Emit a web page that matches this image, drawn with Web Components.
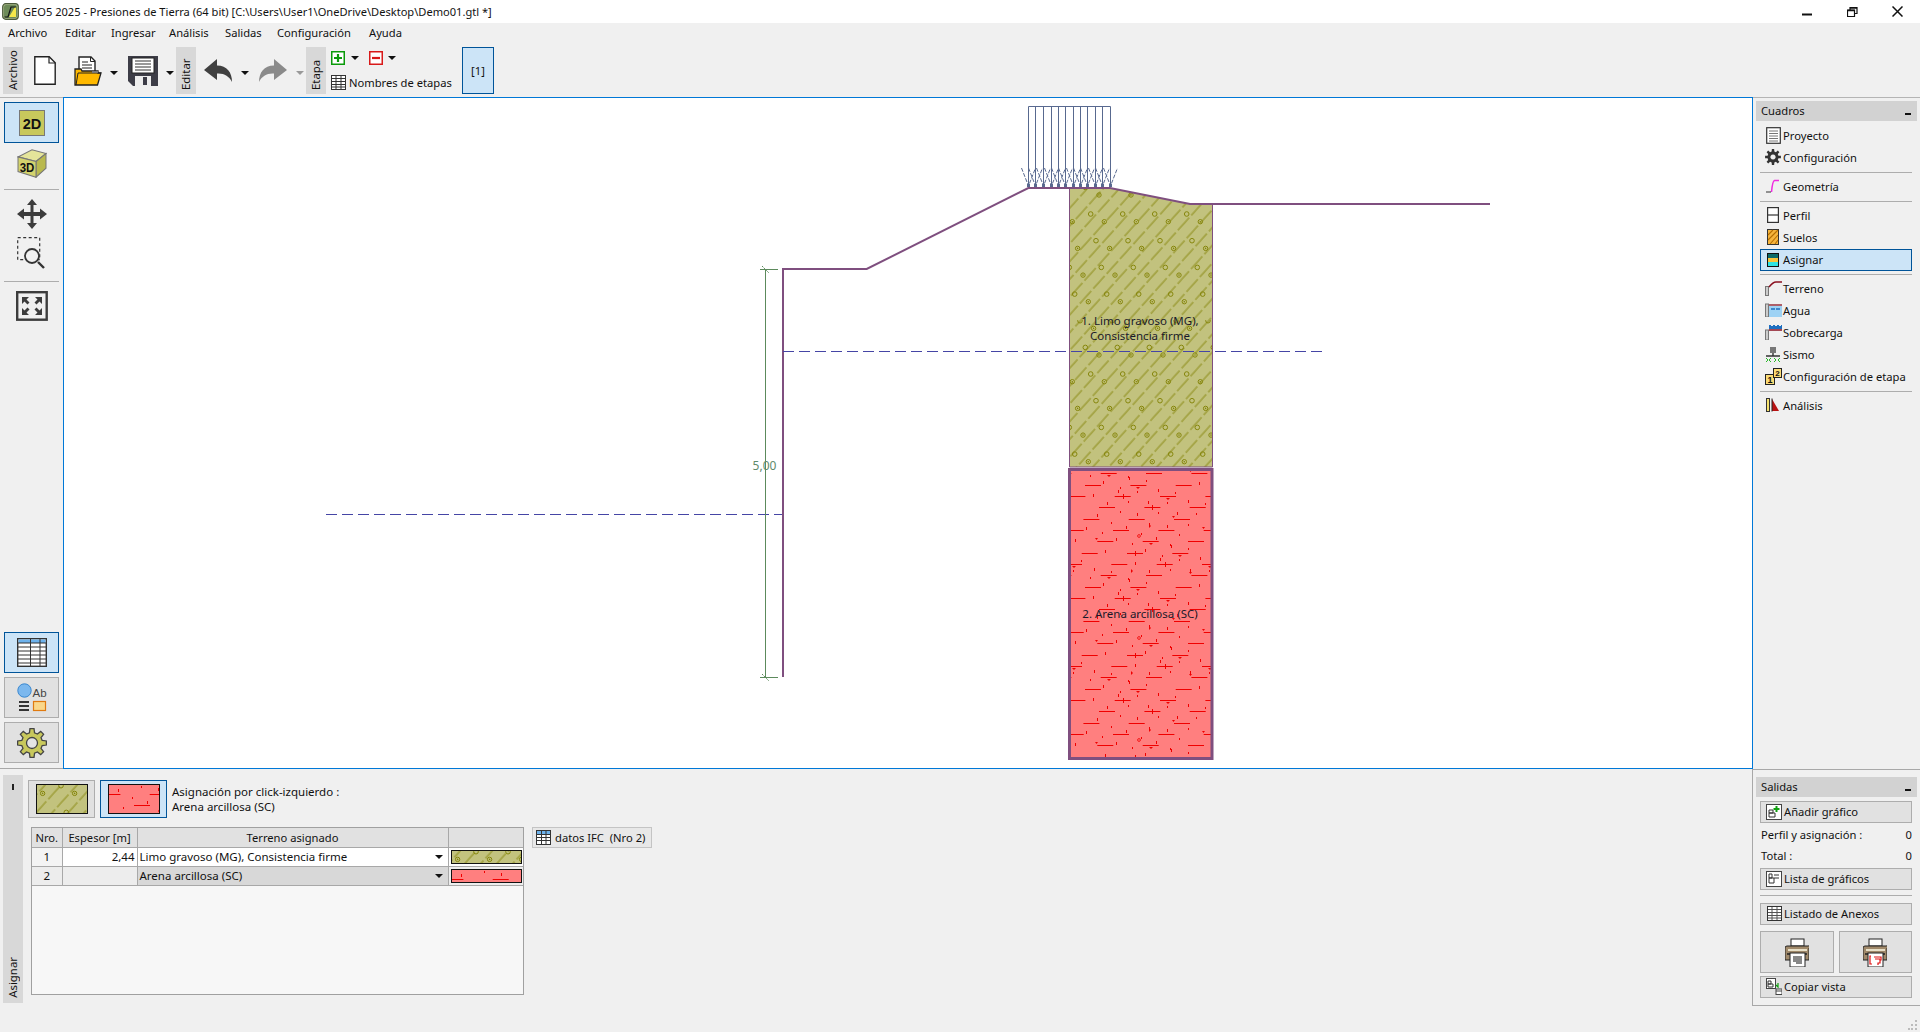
<!DOCTYPE html>
<html lang="es"><head><meta charset="utf-8"><title>GEO5 2025</title>
<style>
html,body{margin:0;padding:0;height:100%;overflow:hidden;background:#f0f0f0}
body{font:11.2px "Noto Sans","Liberation Sans",sans-serif;color:#111}
</style></head><body>
<geo-app></geo-app>
<script>
const svg=(w,h,b,vb)=>`<svg xmlns="http://www.w3.org/2000/svg" width="${w}" height="${h}" viewBox="${vb||`0 0 ${w} ${h}`}" style="display:block;flex:none">${b}</svg>`;
function gearPath(cx,cy,R,r,n){let d='';for(let i=0;i<n;i++){const a=i*2*Math.PI/n,s=Math.PI/n;
 const P=(rad,t)=>`${(cx+rad*Math.cos(a+t)).toFixed(2)} ${(cy+rad*Math.sin(a+t)).toFixed(2)}`;
 d+=(i?'L':'M')+P(r,-s*.62)+'L'+P(R,-s*.36)+'L'+P(R,s*.36)+'L'+P(r,s*.62);}
 return d+'Z';}
const soilDefs=(()=>{
 const mod=(v,m)=>((v%m)+m)%m;
 let c='';
 for(let i=0;i<6;i++){
  const dx=mod(1088.3+5.33*i,32),dy=mod(301.7+26.67*i,160),hx=mod(1080+5.33*i,32),hy=mod(320.7+26.67*i,160);
  for(const o of[-32,0,32]){
   c+=`<circle cx="${(dx+o).toFixed(1)}" cy="${dy.toFixed(1)}" r="2.2" fill="none" stroke="#85850a"/><circle cx="${(dx+o).toFixed(1)}" cy="${dy.toFixed(1)}" r=".8" fill="#85850a"/>`;
   c+=`<circle cx="${(hx+o).toFixed(1)}" cy="${hy.toFixed(1)}" r="2.3" fill="none" stroke="#85850a"/>`;
  }
 }
 let t='';const W=136,H=102;
 const oy=mod(473.3,H),ox=mod(1100.7,W);
 for(let k=0;k<9;k++)for(let j=0;j<3;j++){
  const x=mod(ox-15.67*k+45.33*j,W),y=mod(oy+11.33*k,H);
  for(const o of[-W,0])t+=`<rect x="${(x+o).toFixed(1)}" y="${y.toFixed(0)}" width="16" height="1" fill="#f00000"/>`;
  const s=(k*7+j*5)%6;
  if(s==0)t+=`<path d="M${(x+6).toFixed(0)} ${(y+2).toFixed(0)}h4l-2 2z" fill="#f00000"/>`;
  if(s==1)t+=`<rect x="${(x+8).toFixed(0)}" y="${(y-2).toFixed(0)}" width="1" height="5" fill="#f00000"/>`;
  if(s==2)t+=`<path d="M${(x+20).toFixed(0)} ${(y+5).toFixed(0)}v4l2-2z" fill="#f00000"/>`;
  if(s==3)t+=`<circle cx="${(x+26).toFixed(0)}" cy="${(y+6).toFixed(0)}" r="1.4" fill="none" stroke="#f00000" stroke-width=".8"/>`;
  if(s==4)t+=`<path d="M${(x-2).toFixed(0)} ${(y-3).toFixed(0)}h3l-1.5 2z" fill="#f00000"/>`;
  t+=`<rect x="${mod(x+(s+1)*5+23,W).toFixed(0)}" y="${mod(y+4+s,H).toFixed(0)}" width="1" height="3" fill="#f00000"/>`;
  t+=`<rect x="${mod(x+(s+2)*7+31,W).toFixed(0)}" y="${mod(y+7-s,H).toFixed(0)}" width="1" height="2" fill="#f00000"/>`;
 }
 return `<defs>
 <pattern id="sc" patternUnits="userSpaceOnUse" width="32" height="160">${c}</pattern>
 <pattern id="sl" patternUnits="userSpaceOnUse" width="20" height="11.9" patternTransform="rotate(-48)"><line x1="0" y1="6" x2="20" y2="6" stroke="#85850a" stroke-width=".9" stroke-dasharray="14 3"/></pattern>
 <pattern id="sr" patternUnits="userSpaceOnUse" width="${W}" height="${H}">${t}</pattern></defs>`;
})();
const I={
 title:svg(17,17,`<rect x=".7" y=".7" width="15.6" height="15.6" rx="3" fill="#a9b98a" stroke="#4a5a3a" stroke-width="1.2"/><rect x="2" y="2" width="13" height="13" rx="2" fill="#6d8b58"/><path d="M7 14h7V4h-1z" fill="#f5e84a"/><path d="M2.5 14H6L9 4h5" fill="none" stroke="#111" stroke-width="1.2"/>`),
 new:svg(22,29,`<path d="M.8.8h14.4l6 6v21.4H.8z" fill="#fff" stroke="#222" stroke-width="1.4"/><path d="M15 .8v6.2h6.2" fill="none" stroke="#222" stroke-width="1.2"/>`),
 open:svg(28,30,`<path d="M5 1h12l4 4v14H5z" fill="#fff" stroke="#222" stroke-width="1.4"/><path d="M16.500 1v4.500H21" fill="none" stroke="#222"/><path d="M8 6h6M8 9h10M8 12h10" stroke="#222" stroke-width="1.200"/><path d="M1 13h6l1 2h16v2h3l-3.500 12H1z" fill="#ffb900" stroke="#222" stroke-width="1.300"/><path d="M2 29 4 17h23" fill="none" stroke="#222" stroke-width="1"/><rect x="18" y="15" width="6" height="2" fill="#777"/>`),
 save:svg(30,30,`<path d="M0 0h30v30H5l-5-5z" fill="#3d3d47"/><rect x="4" y="2" width="22" height="15" fill="#fff" stroke="#222"/><path d="M7 5h16M7 8h16M7 11h16M7 14h16" stroke="#333" stroke-width="1.2"/><rect x="7" y="20" width="16" height="10" fill="#eee"/><rect x="15" y="21" width="4" height="8" fill="#3d3d47"/>`),
 undo:svg(28,23,`<path d="M0 11 13 0v6.5c10 0 15 7 15 16.500-3-6-8-9-15-8.500V21z" fill="#404040"/>`),
 redo:svg(28,23,`<path d="M28 11 15 0v6.500C5 6.500 0 13.500 0 23c3-6 8-9 15-8.500V21z" fill="#8a8a8a"/>`),
 caret:svg(8,4,`<path d="M0 0h8L4 4z" fill="#111"/>`),
 caretg:svg(8,4,`<path d="M0 0h8L4 4z" fill="#999"/>`),
 plus:svg(14,14,`<rect x=".75" y=".75" width="12.5" height="12.5" fill="#fff" stroke="#0a9a0a" stroke-width="1.500"/><path d="M7 3v8M3 7h8" stroke="#0a9a0a" stroke-width="2.200"/>`),
 minus:svg(14,14,`<rect x=".75" y=".75" width="12.500" height="12.500" fill="#fff" stroke="#d81a1a" stroke-width="1.500"/><path d="M3 7h8" stroke="#d81a1a" stroke-width="2.200"/>`),
 grid:svg(15,15,`<rect x=".5" y=".5" width="14" height="14" fill="#fff" stroke="#333"/><path d="M1 3.500h13M1 6.500h13M1 9.500h13M1 12h13M5 1v13M10 1v13" stroke="#333"/>`),
 d2:svg(26,26,`<rect x=".5" y=".5" width="25" height="25" fill="#c8c85c" stroke="#777"/><text x="13" y="18.500" text-anchor="middle" font-family="'Liberation Sans',sans-serif" font-weight="700" font-size="14.500" fill="#111">2D</text>`),
 d3:svg(30,29,`<g transform="scale(1,1.13)"><path d="M1 7 15 .7 29 4 19 11z" fill="#e4e49a" stroke="#777"/><path d="M19 11 29 4v13l-10 8z" fill="#b9b94e" stroke="#777"/><path d="M1 7l18 4v14L1 20z" fill="#d3d36d" stroke="#777"/><text x="10" y="20" text-anchor="middle" font-family="'Liberation Sans',sans-serif" font-weight="700" font-size="11.500" fill="#111">3D</text></g>`),
 move:svg(30,30,`<path d="M15 0l5 6h-3.500v7H23V9.500l7 5.500-7 5.500V17h-6.500v7H20l-5 6-5-6h3.500v-7H7v3.500L0 15l7-5.500V13h6.500V6H10z" fill="#3c3c3c"/>`),
 zoomr:svg(30,32,`<rect x=".7" y=".7" width="22" height="22" fill="none" stroke="#333" stroke-width="1.200" stroke-dasharray="3 2.500"/><circle cx="15" cy="19" r="7" fill="#f0f0f0" stroke="#333" stroke-width="1.800"/><path d="M21 25l6 6" stroke="#333" stroke-width="2.400"/>`),
 full:svg(32,30,`<rect x="1.200" y="1.200" width="29.500" height="27.500" fill="none" stroke="#3c3c3c" stroke-width="2.400"/><g fill="#3c3c3c"><path d="M6 6h7l-2.500 2.500 3 3-2 2-3-3L6 13zM26 6v7l-2.500-2.500-3 3-2-2 3-3L19 6zM6 24v-7l2.500 2.500 3-3 2 2-3 3L13 24zM26 24h-7l2.500-2.500-3-3 2-2 3 3L26 17z"/></g>`),
 tbl:svg(30,29,`<rect x=".7" y=".7" width="28.600" height="27.600" fill="#fff" stroke="#333" stroke-width="1.400"/><rect x="1.500" y="1.500" width="27" height="3.500" fill="#6db2ec"/><path d="M1 5h28M1 9h28M1 13h28M1 17h28M1 21h28M1 25h28M13.500 1v27M23 1v27" stroke="#333" stroke-width="1"/>`),
 tbl2:svg(15,15,`<rect x=".5" y=".5" width="14" height="14" fill="#fff" stroke="#333"/><rect x="1" y="1" width="13" height="3" fill="#6db2ec"/><path d="M1 4.500h13M1 7.500h13M1 10.500h13M5.500 1v13M10 1v13" stroke="#333"/>`),
 ab:svg(30,30,`<circle cx="7.500" cy="7.500" r="6.700" fill="#7cb8ee" stroke="#3a88d0" stroke-width="1"/><text x="15.500" y="14" font-family="'Liberation Sans',sans-serif" font-size="11.500" fill="#444">Ab</text><path d="M2 19h10M2 23h10M2 27h10" stroke="#333" stroke-width="1.800"/><rect x="16.500" y="18.500" width="12" height="9" fill="#fad78a" stroke="#e07a10" stroke-width="1.200"/>`),
 gear:svg(30,30,`<path d="${gearPath(15,15,14.500,10.500,8)}" fill="#c8c85c" stroke="#444" stroke-width="1.300"/><circle cx="15" cy="15" r="5.500" fill="#e4e4e4" stroke="#444" stroke-width="1.300"/>`),
 doc:svg(15,17,`<rect x=".7" y=".7" width="13.600" height="15.600" fill="#fff" stroke="#333" stroke-width="1.200"/><path d="M3 4h9M3 6.500h9M3 9h9M3 11.500h9M3 14h9" stroke="#666" stroke-width=".9"/>`),
 gearD:svg(16,16,`<path fill-rule="evenodd" d="${gearPath(8,8,8,5.600,8)}M8 5.400a2.600 2.600 0 1 0 .01 0z" fill="#333"/>`),
 geom:svg(14,14,`<path d="M5.500 13Q6.500 2 8.500 1.500H13" fill="none" stroke="#f02ce0" stroke-width="1.500"/><path d="M0 13h5" stroke="#333" stroke-width="1"/>`),
 perfil:svg(12,16,`<rect x=".6" y=".6" width="10.800" height="14.800" fill="#fff" stroke="#333" stroke-width="1.200"/><path d="M1 8h10" stroke="#333" stroke-width="1.200"/>`),
 suelos:svg(12,16,`<rect x=".5" y=".5" width="11" height="15" fill="#f6b53d" stroke="#333"/><path d="M1 6 6 1M1 11 11 1M3 15 11 6M8 15l3-4" stroke="#b66d00" stroke-width="1.100"/>`),
 asignar:svg(12,14,`<rect x=".5" y=".5" width="11" height="13" fill="#fff" stroke="#111"/><rect x="1" y="1" width="10" height="4" fill="#0c6a6a"/><rect x="1" y="5" width="10" height="4" fill="#f9c33a"/><rect x="1" y="9" width="10" height="4" fill="#2ee3e3"/>`),
 terreno:svg(17,15,`<rect x=".5" y="5.500" width="3" height="9" fill="#ccc" stroke="#777"/><path d="M4 6Q8 1 11 1h6" fill="none" stroke="#8a1020" stroke-width="1.500"/>`),
 agua:svg(17,14,`<rect x=".5" y="1" width="3" height="13" fill="#ccc" stroke="#777"/><rect x="4" y="3" width="13" height="11" fill="#9ed2f4"/><path d="M4 2h13" stroke="#8a1020" stroke-width="1.300"/><path d="M6 6h4M11 6h4" stroke="#1e6fc0" stroke-width="1.500"/>`),
 sobre:svg(17,15,`<rect x=".5" y="5" width="3" height="10" fill="#ccc" stroke="#777"/><path d="M4 5h13" stroke="#8a1020" stroke-width="1.500"/><path d="M4 0h2v1h2V0h2v1h2V0h2v1h2V0h1v4H4z" fill="#1e6fc0"/>`),
 sismo:svg(16,15,`<rect x="5" y="0" width="6" height="6" fill="#777"/><path d="M8 6v3M1 9h14" stroke="#333" stroke-width="1.400"/><path d="M1 11l2 2-2 2M6 11l-2 2 2 2M9 11l2 2-2 2M15 11l-2 2 2 2" fill="none" stroke="#2ab82a"/>`),
 etapa:svg(17,17,`<rect x=".5" y="6.500" width="9" height="10" fill="#fbdc76" stroke="#222"/><text x="5" y="15" text-anchor="middle" font-family="'Liberation Sans',sans-serif" font-weight="700" font-size="9" fill="#111">1</text><rect x="8.500" y=".5" width="8" height="9" fill="#fbdc76" stroke="#222"/><text x="12.500" y="8" text-anchor="middle" font-family="'Liberation Sans',sans-serif" font-weight="700" font-size="8" fill="#111">2</text>`),
 analisis:svg(14,14,`<rect x=".5" y=".5" width="3" height="13" fill="#f6e26f" stroke="#333"/><path d="M6 13V1l7 12z" fill="#b81212"/><path d="M6 .5v13" stroke="#222"/>`),
 addg:svg(16,16,`<rect x=".5" y=".5" width="15" height="15" fill="#fff" stroke="#444"/><path d="M3 6h4v3H3zM3 9h6v4H3z" fill="none" stroke="#333"/><path d="M10.500 2v6M7.500 5h6" stroke="#10a010" stroke-width="2"/>`),
 listg:svg(16,16,`<rect x=".5" y=".5" width="15" height="15" fill="#fff" stroke="#444"/><path d="M3 3h3v4H3zM3 7h5v5H3zM8 4h5M8 7h5" fill="none" stroke="#333"/>`),
 list:svg(15,15,`<rect x=".5" y=".5" width="14" height="14" fill="#fff" stroke="#333"/><path d="M1 3.500h13M1 6.500h13M1 9.500h13M1 12h13M5 1v13M10 1v13" stroke="#555"/>`),
 print1:svg(24,29,`<rect x="6" y="1" width="13" height="7" fill="#fff" stroke="#222"/><path d="M0 10a2 2 0 0 1 2-2h21a1 1 0 0 1 1 2v12H0z" fill="#a0896a" stroke="#222"/><path d="M3 12h19" stroke="#e8e0c8" stroke-width="2"/><path d="M2 16h20" stroke="#222" stroke-width="1.500"/><rect x="5" y="15" width="15" height="14" fill="#fff" stroke="#222"/><path d="M8 19h9M8 21h9M8 23h9M11 25h6" stroke="#111"/>`),
 print2:svg(24,29,`<rect x="6" y="1" width="13" height="7" fill="#fff" stroke="#222"/><path d="M0 10a2 2 0 0 1 2-2h21a1 1 0 0 1 1 2v12H0z" fill="#a0896a" stroke="#222"/><path d="M3 12h19" stroke="#e8e0c8" stroke-width="2"/><path d="M2 16h20" stroke="#222" stroke-width="1.500"/><rect x="5" y="15" width="15" height="14" fill="#fff" stroke="#222"/><path d="M8 18h-1v8h2M11 19h7v3h-1v3h-2v2M12 21h5" fill="none" stroke="#e01010" stroke-width="1.200"/>`),
 copy:svg(16,17,`<rect x=".5" y=".5" width="9" height="10" fill="#fff" stroke="#444"/><path d="M2 3h3v3H2zM2 6h5v3H2z" fill="none" stroke="#333"/><path d="M12 5v4l-2-2" fill="none" stroke="#10a010" stroke-width="1.200"/><rect x="10" y="11" width="6" height="5.500" fill="#fff" stroke="#444"/><path d="M10 13h6" stroke="#444"/>`)
};
function def(name,html){customElements.define(name,class extends HTMLElement{
 constructor(){super();this.attachShadow({mode:'open'});}
 connectedCallback(){this.shadowRoot.innerHTML=typeof html==='function'?html(this):html;}
});}
def('geo-icon',el=>`<style>:host{display:inline-flex;flex:none}</style>${I[el.getAttribute('name')]||''}`);
def('geo-titlebar',`<style>:host{display:flex;align-items:center;height:23px;background:#fff;flex:none}
.t{margin-left:4px;font-size:11.1px;white-space:nowrap}.i{margin-left:2px;display:flex}.sp{flex:1}
.w{width:45px;height:23px;display:flex;align-items:center;justify-content:center}</style>
<span class="i"><geo-icon name="title"></geo-icon></span><span class="t">GEO5 2025 - Presiones de Tierra (64 bit) [C:\\Users\\User1\\OneDrive\\Desktop\\Demo01.gtl *]</span><span class="sp"></span>
<span class="w">${svg(11,10,'<path d="M0 7.500h10" stroke="#111" stroke-width="2"/>')}</span>
<span class="w">${svg(11,10,'<path d="M3 2.500V.5h7v6H8M.5 3h7v6.500h-7z" fill="none" stroke="#111" stroke-width="1.200"/><path d="M.5 3.500h7M3 1h7" stroke="#111" stroke-width="1.600"/>')}</span>
<span class="w">${svg(11,11,'<path d="M.5.5l10 10M10.500.5l-10 10" stroke="#111" stroke-width="1.500"/>')}</span>`);
def('geo-menubar',`<style>:host{display:flex;align-items:center;height:21px;padding:0 0 2px 8px;box-sizing:border-box;flex:none;background:#f0f0f0}span{white-space:nowrap;font-size:11.2px}</style>
<span style="width:57px">Archivo</span><span style="width:46px">Editar</span><span style="width:58px">Ingresar</span><span style="width:56px">Análisis</span><span style="width:52px">Salidas</span><span style="width:92px">Configuración</span><span>Ayuda</span>`);
def('geo-vtab',`<style>:host{display:flex;align-items:center;justify-content:flex-start;flex:none;width:20px;height:47px;background:#d8d8d8;font-size:11.4px;writing-mode:vertical-rl;transform:rotate(180deg);box-sizing:border-box;padding-top:4px;padding-left:2px;white-space:nowrap;overflow:hidden}</style><slot></slot>`);
def('geo-toolbar',`<style>:host{display:flex;align-items:center;height:53px;padding:0 0 0 3px;flex:none;box-sizing:border-box;background:#f0f0f0}
geo-icon{display:flex}.c{display:flex;flex-direction:column;width:131px;margin-left:5px;height:47px;justify-content:flex-start;padding-top:4px;box-sizing:border-box}
.r{display:flex;align-items:center}.n{white-space:nowrap;font-size:11.2px;margin-left:3px}
.s{width:32px;height:47px;box-sizing:border-box;background:#cce4f7;border:1px solid #005499;display:flex;align-items:center;justify-content:center;font-size:11.2px}</style>
<geo-vtab>Archivo</geo-vtab><geo-icon name="new" style="margin-left:11px"></geo-icon><geo-icon name="open" style="margin-left:18px"></geo-icon><geo-icon name="caret" style="margin-left:8px;margin-top:4px"></geo-icon><geo-icon name="save" style="margin-left:10px"></geo-icon><geo-icon name="caret" style="margin-left:8px;margin-top:4px"></geo-icon>
<geo-vtab style="margin-left:2px">Editar</geo-vtab><geo-icon name="undo" style="margin-left:8px"></geo-icon><geo-icon name="caret" style="margin-left:9px;margin-top:4px"></geo-icon><geo-icon name="redo" style="margin-left:10px"></geo-icon><geo-icon name="caretg" style="margin-left:9px;margin-top:4px"></geo-icon>
<geo-vtab style="margin-left:2px">Etapa</geo-vtab>
<div class="c"><div class="r"><geo-icon name="plus"></geo-icon><geo-icon name="caret" style="margin-left:6px"></geo-icon><geo-icon name="minus" style="margin-left:10px"></geo-icon><geo-icon name="caret" style="margin-left:5px"></geo-icon></div>
<div class="r" style="margin-top:10px"><geo-icon name="grid"></geo-icon><span class="n">Nombres de etapas</span></div></div>
<div class="s">[1]</div>`);
def('geo-railbtn',`<style>:host{display:flex;align-items:center;justify-content:center;width:55px;height:41px;box-sizing:border-box;flex:none;border:1px solid transparent}
:host([on]){background:#cce4f7;border-color:#005499}:host([off]){background:#e1e1e1;border-color:#adadad}</style><slot></slot>`);
def('geo-rail',`<style>:host{display:flex;flex-direction:column;width:63px;flex:none;box-sizing:border-box;border-top:1px solid #b4b4b4;border-bottom:1px solid #a8a8a8;padding:4px 4px 5px}
.sep{height:1px;background:#adadad;flex:none}.sp{flex:1}</style>
<geo-railbtn on><geo-icon name="d2"></geo-icon></geo-railbtn><geo-railbtn><geo-icon name="d3"></geo-icon></geo-railbtn><div class="sep" style="margin-top:5px"></div>
<geo-railbtn style="margin-top:2px;height:44px"><geo-icon name="move"></geo-icon></geo-railbtn><geo-railbtn style="height:34px"><geo-icon name="zoomr"></geo-icon></geo-railbtn><div class="sep" style="margin-top:11px"></div>
<geo-railbtn style="margin-top:3px"><geo-icon name="full"></geo-icon></geo-railbtn>
<div class="sp"></div>
<geo-railbtn on><geo-icon name="tbl"></geo-icon></geo-railbtn><geo-railbtn off style="margin-top:4px"><geo-icon name="ab"></geo-icon></geo-railbtn><geo-railbtn off style="margin-top:4px"><geo-icon name="gear"></geo-icon></geo-railbtn>`);
def('geo-canvas',()=>{
 const arrows=[1028.3,1035.3,1043.3,1050.6,1058.3,1065.3,1072.6,1080,1087.3,1095.3,1102.3,1110.3].map(x=>x.toFixed(0));
 let load=`<path d="M${arrows[0]}.5 106.500H${arrows[11]}.5" stroke="#58698f"/>`;
 for(const x of arrows){
  load+=`<path d="M${x}.5 106.500V185" stroke="#58698f" stroke-width="1"/><path d="M${+x-7}.5 168 ${x}.5 186 ${+x+7}.5 168" fill="none" stroke="#58698f" stroke-dasharray="4 1.500"/><rect x="${+x-1}" y="184" width="3" height="3" fill="#58698f"/>`;
 }
 const soil1="1069.500,188 1110,188 1190,204 1212.500,204 1212.500,467 1069.500,467";
 return `<style>:host{display:block;flex:1;box-sizing:border-box;border:1px solid #0078d7;background:#fff;min-width:0;overflow:hidden}svg{display:block}text{font:11.5px "Noto Sans","Liberation Sans",sans-serif;fill:#1a1a2a}</style>
 <svg width="1688" height="670" viewBox="64 98 1688 670">${soilDefs}
 <polygon points="${soil1}" fill="#c2c27e"/><polygon points="${soil1}" fill="url(#sl)"/><polygon points="${soil1}" fill="url(#sc)"/>
 <polyline points="1069.500,188 1069.500,467 1212.500,467 1212.500,204" fill="none" stroke="#7f4f7f"/>
 <rect x="1069.500" y="469.500" width="142.500" height="289" fill="#ff7f7f"/><rect x="1069.500" y="469.500" width="142.500" height="289" fill="url(#sr)"/>
 <rect x="1069.500" y="469.500" width="142.500" height="289" fill="none" stroke="#7f4f7f" stroke-width="3"/>
 ${load}
 <polyline points="783,677 783,269 866.700,269 1028.300,188 1110,188 1190,204 1490,204" fill="none" stroke="#7f4f7f" stroke-width="2"/>
 <path d="M783 351.500H1322M326 514.500H782" stroke="#4545a5" stroke-dasharray="11 5"/>
 <g stroke="#5c8a5c"><path d="M765.500 269V677M760 269.500H778M760 677.500H778"/><path d="M762 266l7 7M762 674l7 7" stroke-dasharray="2 1"/></g>
 <text x="764.500" y="470" text-anchor="middle" style="font-size:12px;fill:#5f8a6a">5,00</text>
 <text x="1140" y="325" text-anchor="middle">1. Limo gravoso (MG),</text><text x="1140" y="340" text-anchor="middle">Consistencia firme</text>
 <text x="1140" y="618" text-anchor="middle">2. Arena arcillosa (SC)</text>
 </svg>`;});
def('geo-hdr',`<style>:host{display:flex;align-items:center;height:20px;background:#d2d2d2;margin:0 3px;padding:0 5px 2px;box-sizing:border-box;flex:none;font-size:11.2px}.sp{flex:1}i{width:6px;height:2px;background:#111;margin-top:7px;margin-right:1px}</style><slot></slot><span class="sp"></span><i></i>`);
def('geo-item',el=>`<style>:host{display:flex;align-items:center;height:22px;margin:0 8px 0 7px;box-sizing:border-box;padding:0 0 2px 3px;flex:none;font-size:11.2px;white-space:nowrap}
:host([sel]){background:#cce4f7;border:1px solid #005499;padding:0 0 1px 2px}.b{width:20px;display:flex;justify-content:center;flex:none}</style>
<span class="b"><geo-icon name="${el.getAttribute('icon')}"></geo-icon></span><slot></slot>`);
def('geo-sep',`<style>:host{display:block;height:1px;background:#adadad;margin:3px 8px 3px 7px;flex:none}</style>`);
def('geo-btn',el=>`<style>:host{display:flex;align-items:center;height:22px;margin:0 8px 0 7px;box-sizing:border-box;padding:0 0 1px 3px;flex:none;font-size:11.2px;white-space:nowrap;background:#e1e1e1;border:1px solid #adadad}
.b{width:20px;display:flex;justify-content:center;flex:none}</style><span class="b"><geo-icon name="${el.getAttribute('icon')}"></geo-icon></span><slot></slot>`);
def('geo-panel',`<style>:host{display:flex;flex-direction:column;width:167px;flex:none;box-sizing:border-box;border-top:1px solid #b4b4b4;padding-top:3px}</style>
<geo-hdr>Cuadros</geo-hdr><div style="height:4px"></div>
<geo-item icon="doc">Proyecto</geo-item><geo-item icon="gearD">Configuración</geo-item><geo-sep></geo-sep>
<geo-item icon="geom">Geometría</geo-item><geo-sep></geo-sep>
<geo-item icon="perfil">Perfil</geo-item><geo-item icon="suelos">Suelos</geo-item><geo-item icon="asignar" sel>Asignar</geo-item><geo-sep></geo-sep>
<geo-item icon="terreno">Terreno</geo-item><geo-item icon="agua">Agua</geo-item><geo-item icon="sobre">Sobrecarga</geo-item><geo-item icon="sismo">Sismo</geo-item><geo-item icon="etapa">Configuración de etapa</geo-item><geo-sep></geo-sep>
<geo-item icon="analisis">Análisis</geo-item>`);
def('geo-out',`<style>:host{display:flex;flex-direction:column;width:168px;height:237px;flex:none;box-sizing:border-box;border:1px solid #a8a8a8;border-right:0;padding-top:7px}
.kv{display:flex;justify-content:space-between;height:21px;align-items:center;margin:0 8px 0 8px;font-size:11.2px;flex:none}
.pr{display:flex;gap:5px;margin:6px 8px 3px 7px;flex:none}.pb{flex:1;height:42px;background:#e1e1e1;border:1px solid #adadad;box-sizing:border-box;display:flex;align-items:center;justify-content:center}</style>
<geo-hdr>Salidas</geo-hdr><div style="height:4px"></div>
<geo-btn icon="addg">Añadir gráfico</geo-btn>
<div class="kv" style="margin-top:1px"><span>Perfil y asignación :</span><span>0</span></div><div class="kv"><span>Total :</span><span>0</span></div>
<geo-btn icon="listg" style="margin-top:2px">Lista de gráficos</geo-btn><geo-sep style="margin-top:5px;margin-bottom:7px"></geo-sep>
<geo-btn icon="list">Listado de Anexos</geo-btn>
<div class="pr"><div class="pb"><geo-icon name="print1"></geo-icon></div><div class="pb"><geo-icon name="print2"></geo-icon></div></div>
<geo-btn icon="copy">Copiar vista</geo-btn>`);
def('geo-swatch',el=>{
 const w=+el.getAttribute('w'),h=+el.getAttribute('h'),k=el.getAttribute('kind');
 const fill=k==='a'?'<rect width="100%" height="100%" fill="#c2c27e"/><rect width="100%" height="100%" fill="url(#sl)"/><rect width="100%" height="100%" fill="url(#sc)"/>':'<rect width="100%" height="100%" fill="#ff7f7f"/><rect width="100%" height="100%" fill="url(#sr)"/>';
 return `<style>:host{display:block;flex:none;width:${w}px;height:${h}px;box-sizing:border-box;border:1px solid #111;overflow:hidden}</style>${svg(w-2,h-2,soilDefs+fill)}`;
});
def('geo-swbtn',`<style>:host{display:flex;align-items:center;justify-content:center;width:67px;height:38px;box-sizing:border-box;background:#e1e1e1;border:1px solid #adadad;flex:none}:host([on]){background:#cce4f7;border-color:#005499}</style><slot></slot>`);
def('geo-table',`<style>:host{display:block;width:493px;height:168px;box-sizing:border-box;background:#f7f7f7;border:1px solid #a0a0a0;flex:none;font-size:11.5px}
table{border-collapse:collapse;table-layout:fixed;width:491px;white-space:nowrap;font:inherit}td,th{padding:0 2px;height:19px;box-sizing:border-box;border:1px solid #a8a8a8;font-weight:400;overflow:hidden}th{font-size:11.2px}tr>*:first-child{border-left:0}tr>*:last-child{border-right:0}tr:first-child>*{border-top:0}
th{background:#e1e1e1;text-align:center}.nr{text-align:center;background:#f4f4f4}.v{text-align:right;background:#fff}.t{background:#fff}.t>div{display:flex;justify-content:space-between;align-items:center;padding-right:3px}.s{padding:0 2px;background:#fff}
.g .nr,.g .v,.g .s{background:#ededed}.g .t{background:#d8d8d8}</style>
<table><colgroup><col style="width:30px"><col style="width:75px"><col style="width:311px"><col style="width:75px"></colgroup>
<tr><th>Nro.</th><th>Espesor [m]</th><th>Terreno asignado</th><th></th></tr>
<tr><td class="nr">1</td><td class="v">2,44</td><td class="t"><div><span>Limo gravoso (MG), Consistencia firme</span><geo-icon name="caret"></geo-icon></div></td><td class="s"><geo-swatch w="71" h="14" kind="a"></geo-swatch></td></tr>
<tr class="g"><td class="nr">2</td><td class="v"></td><td class="t"><div><span>Arena arcillosa (SC)</span><geo-icon name="caret"></geo-icon></div></td><td class="s"><geo-swatch w="71" h="14" kind="b"></geo-swatch></td></tr></table>`);
def('geo-assign',`<style>:host{display:flex;flex:1;min-width:0;padding:6px 0 0 3px;box-sizing:border-box;font-size:11.2px}
.tab{width:20px;height:228px;background:#d8d8d8;flex:none;display:flex;flex-direction:column;align-items:center;justify-content:space-between;padding:9px 0 5px;box-sizing:border-box}
.tab b{display:block;width:2px;height:6px;background:#222}.tab span{writing-mode:vertical-rl;transform:rotate(180deg);font-size:11.4px;margin-right:2px}
.m{margin-left:5px;padding-top:5px;display:flex;flex-direction:column}.r{display:flex;align-items:center;gap:5px;height:38px}.tx{line-height:15px;font-size:11.5px}
.r2{display:flex;margin-top:9px;margin-left:3px;gap:8px;align-items:flex-start}
.ifc{display:flex;align-items:center;height:21px;width:120px;box-sizing:border-box;border:1px solid #c4c4c4;background:#e8e8e8;padding:0 0 1px 3px;gap:4px;white-space:nowrap;flex:none}</style>
<div class="tab"><b></b><span>Asignar</span></div>
<div class="m"><div class="r"><geo-swbtn><geo-swatch w="52" h="30" kind="a"></geo-swatch></geo-swbtn><geo-swbtn on><geo-swatch w="52" h="30" kind="b"></geo-swatch></geo-swbtn><div class="tx">Asignación por click-izquierdo :<br>Arena arcillosa (SC)</div></div>
<div class="r2"><geo-table></geo-table><div class="ifc"><geo-icon name="tbl2"></geo-icon><span>datos IFC&nbsp; (Nro 2)</span></div></div></div>`);
def('geo-app',`<style>:host{display:flex;flex-direction:column;width:1920px;height:1032px;background:#f0f0f0;position:relative}
.main{display:flex;height:672px;flex:none}.bot{display:flex;flex:1;min-height:0;align-items:flex-start;justify-content:space-between}
.rw{display:flex;flex-direction:column;align-items:flex-end;flex:none;width:168px;height:100%;position:relative}
.grip{position:absolute;right:2px;bottom:2px;opacity:.6}</style>
<geo-titlebar></geo-titlebar><geo-menubar></geo-menubar><geo-toolbar></geo-toolbar>
<div class="main"><geo-rail></geo-rail><geo-canvas></geo-canvas><geo-panel></geo-panel></div>
<div class="bot"><geo-assign></geo-assign><div class="rw"><geo-out></geo-out><span class="grip">${svg(10,11,'<path d="M7 1h2v2H7zM3 5h2v2H3zM7 5h2v2H7zM0 9h2v2H0zM3 9h2v2H3zM7 9h2v2H7z" fill="#999"/>')}</span></div></div>`);
</script></body></html>
